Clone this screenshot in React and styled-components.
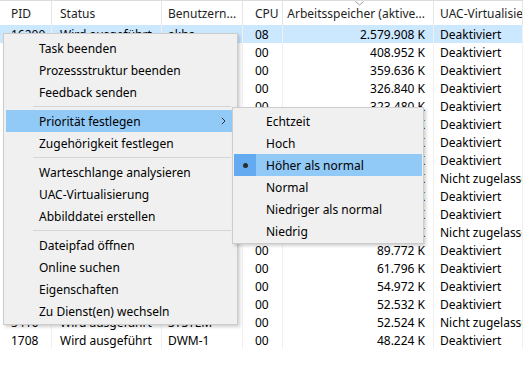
import React from 'react';
import styled, { createGlobalStyle } from 'styled-components';

const GlobalStyle = createGlobalStyle`
  html, body {
    margin: 0;
    padding: 0;
    background: #ffffff;
  }
  body {
    font-family: "Noto Sans", "Open Sans", sans-serif;
    font-size: 12px;
    color: #000000;
  }
`;

const GRID = '52px 110px 81px 40px 151px 1fr';

const Page = styled.div`
  position: relative;
  width: 523px;
  height: 384px;
  overflow: hidden;
  background: #ffffff;
`;

const Table = styled.div`
  display: flex;
  flex-direction: column;
  width: 100%;
`;

const HeaderRow = styled.div`
  display: grid;
  grid-template-columns: ${GRID};
  height: 25px;
  border-top: 1px solid #dcdcdc;
  box-sizing: border-box;
`;

const HeaderCell = styled.div`
  position: relative;
  display: flex;
  align-items: center;
  justify-content: ${p => (p.$align === 'right' ? 'flex-end' : 'flex-start')};
  padding: ${p => p.$pad};
  border-right: 1px solid #e5e5e5;
  white-space: nowrap;
  overflow: hidden;
  color: #1e1e1e;
`;

const SortArrow = styled.svg`
  position: absolute;
  left: 72px;
  top: 0px;
  width: 9px;
  height: 5px;
`;

const Row = styled.div`
  display: grid;
  grid-template-columns: ${GRID};
  height: 18px;
  background: ${p => (p.$selected ? '#cce8ff' : 'transparent')};
`;

const Cell = styled.div`
  display: flex;
  align-items: center;
  justify-content: ${p => (p.$align === 'right' ? 'flex-end' : 'flex-start')};
  padding: ${p => p.$pad};
  border-right: 1px solid #f0f0f0;
  white-space: nowrap;
  overflow: hidden;
`;

const Menu = styled.div`
  position: absolute;
  left: ${p => p.$x}px;
  top: ${p => p.$y}px;
  width: ${p => p.$w}px;
  box-sizing: border-box;
  padding: ${p => p.$pad};
  background: #f0f0f0;
  border: 1px solid #cccccc;
  box-shadow: 2px 2px 3px rgba(0, 0, 0, 0.18);
  display: flex;
  flex-direction: column;
`;

const Item = styled.div`
  display: flex;
  align-items: center;
  height: 22px;
  background: ${p => (p.$active ? '#91c9f7' : 'transparent')};
  white-space: nowrap;
`;

const CheckCol = styled.div`
  width: 22px;
  height: 100%;
  display: flex;
  align-items: center;
  justify-content: center;
  background: ${p => (p.$active && p.$checked ? '#64aaf0' : 'transparent')};
`;

const Dot = styled.span`
  width: 5px;
  height: 5px;
  border-radius: 50%;
  background: #2b2b2b;
`;

const Label = styled.span`
  flex: 1;
  padding-left: ${p => p.$indent}px;
`;

const Chevron = styled.svg`
  width: 5px;
  height: 8px;
  margin-right: 9px;
`;

const Separator = styled.div`
  height: 7px;
  display: flex;
  align-items: center;
  padding: 0 4px 0 27px;

  &::after {
    content: '';
    flex: 1;
    height: 1px;
    background: #d5d5d5;
  }
`;

const columns = [
  { key: 'pid', label: 'PID', pad: '0 0 0 11px' },
  { key: 'status', label: 'Status', pad: '0 0 0 8px' },
  { key: 'user', label: 'Benutzern...', pad: '0 0 0 6px' },
  { key: 'cpu', label: 'CPU', pad: '0 0 0 12px' },
  { key: 'mem', label: 'Arbeitsspeicher (aktive...', pad: '0 8px 0 0', align: 'right' },
  { key: 'uac', label: 'UAC-Virtualisierung', pad: '0 0 0 6px' },
];

const D = 'Deaktiviert';
const N = 'Nicht zugelassen';
const R = 'Wird ausgeführt';

const rows = [
  ['16200', R, 'akha', '08', '2.579.908 K', D],
  ['11244', R, 'akha', '00', '408.952 K', D],
  ['9876', R, 'akha', '00', '359.636 K', D],
  ['14520', R, 'akha', '00', '326.840 K', D],
  ['7312', R, 'akha', '00', '323.480 K', D],
  ['12088', R, 'akha', '00', '287.116 K', D],
  ['6604', R, 'akha', '00', '212.404 K', D],
  ['13356', R, 'akha', '00', '174.820 K', D],
  ['4124', R, 'SYSTEM', '00', '151.332 K', N],
  ['10472', R, 'akha', '00', '132.968 K', D],
  ['8840', R, 'akha', '00', '118.204 K', D],
  ['2964', R, 'SYSTEM', '00', '97.416 K', N],
  ['15012', R, 'akha', '00', '89.772 K', D],
  ['9220', R, 'akha', '00', '61.796 K', D],
  ['11808', R, 'akha', '00', '54.972 K', D],
  ['6128', R, 'akha', '00', '52.532 K', D],
  ['5416', R, 'SYSTEM', '00', '52.524 K', N],
  ['1708', R, 'DWM-1', '00', '48.224 K', D],
];

const mainMenu = [
  'Task beenden',
  'Prozessstruktur beenden',
  'Feedback senden',
  '-',
  { label: 'Priorität festlegen', active: true, sub: true },
  'Zugehörigkeit festlegen',
  '-',
  'Warteschlange analysieren',
  'UAC-Virtualisierung',
  'Abbilddatei erstellen',
  '-',
  'Dateipfad öffnen',
  'Online suchen',
  'Eigenschaften',
  'Zu Dienst(en) wechseln',
];

const priorityMenu = [
  { label: 'Echtzeit' },
  { label: 'Hoch' },
  { label: 'Höher als normal', active: true, checked: true },
  { label: 'Normal' },
  { label: 'Niedriger als normal' },
  { label: 'Niedrig' },
];

const MenuItems = ({ items, indent }) =>
  items.map((it, i) => {
    if (it === '-') return <Separator key={i} />;
    const item = typeof it === 'string' ? { label: it } : it;
    return (
      <Item key={i} $active={item.active}>
        <CheckCol $active={item.active} $checked={item.checked}>
          {item.checked && <Dot />}
        </CheckCol>
        <Label $indent={indent}>{item.label}</Label>
        {item.sub && (
          <Chevron viewBox="0 0 5 8">
            <path d="M0.8 0.8 L4 4 L0.8 7.2" fill="none" stroke="#333" strokeWidth="1" />
          </Chevron>
        )}
      </Item>
    );
  });

export default function App() {
  return (
    <Page>
      <GlobalStyle />
      <Table>
        <HeaderRow>
          {columns.map(c => (
            <HeaderCell key={c.key} $pad={c.pad} $align={c.align}>
              {c.key === 'mem' && (
                <SortArrow viewBox="0 0 9 5">
                  <path d="M0.5 0.5 L4.5 4 L8.5 0.5" fill="none" stroke="#9a9a9a" strokeWidth="1" />
                </SortArrow>
              )}
              {c.label}
            </HeaderCell>
          ))}
        </HeaderRow>
        {rows.map((r, i) => (
          <Row key={i} $selected={i === 0}>
            {columns.map((c, j) => (
              <Cell key={c.key} $pad={c.pad} $align={c.align}>
                {r[j]}
              </Cell>
            ))}
          </Row>
        ))}
      </Table>

      <Menu $x={3} $y={33} $w={235} $pad="3px 2px 2px 2px">
        <MenuItems items={mainMenu} indent={11} />
      </Menu>

      <Menu $x={232} $y={107} $w={192} $pad="2px 1px 1px 1px">
        <MenuItems items={priorityMenu} indent={10} />
      </Menu>
    </Page>
  );
}
